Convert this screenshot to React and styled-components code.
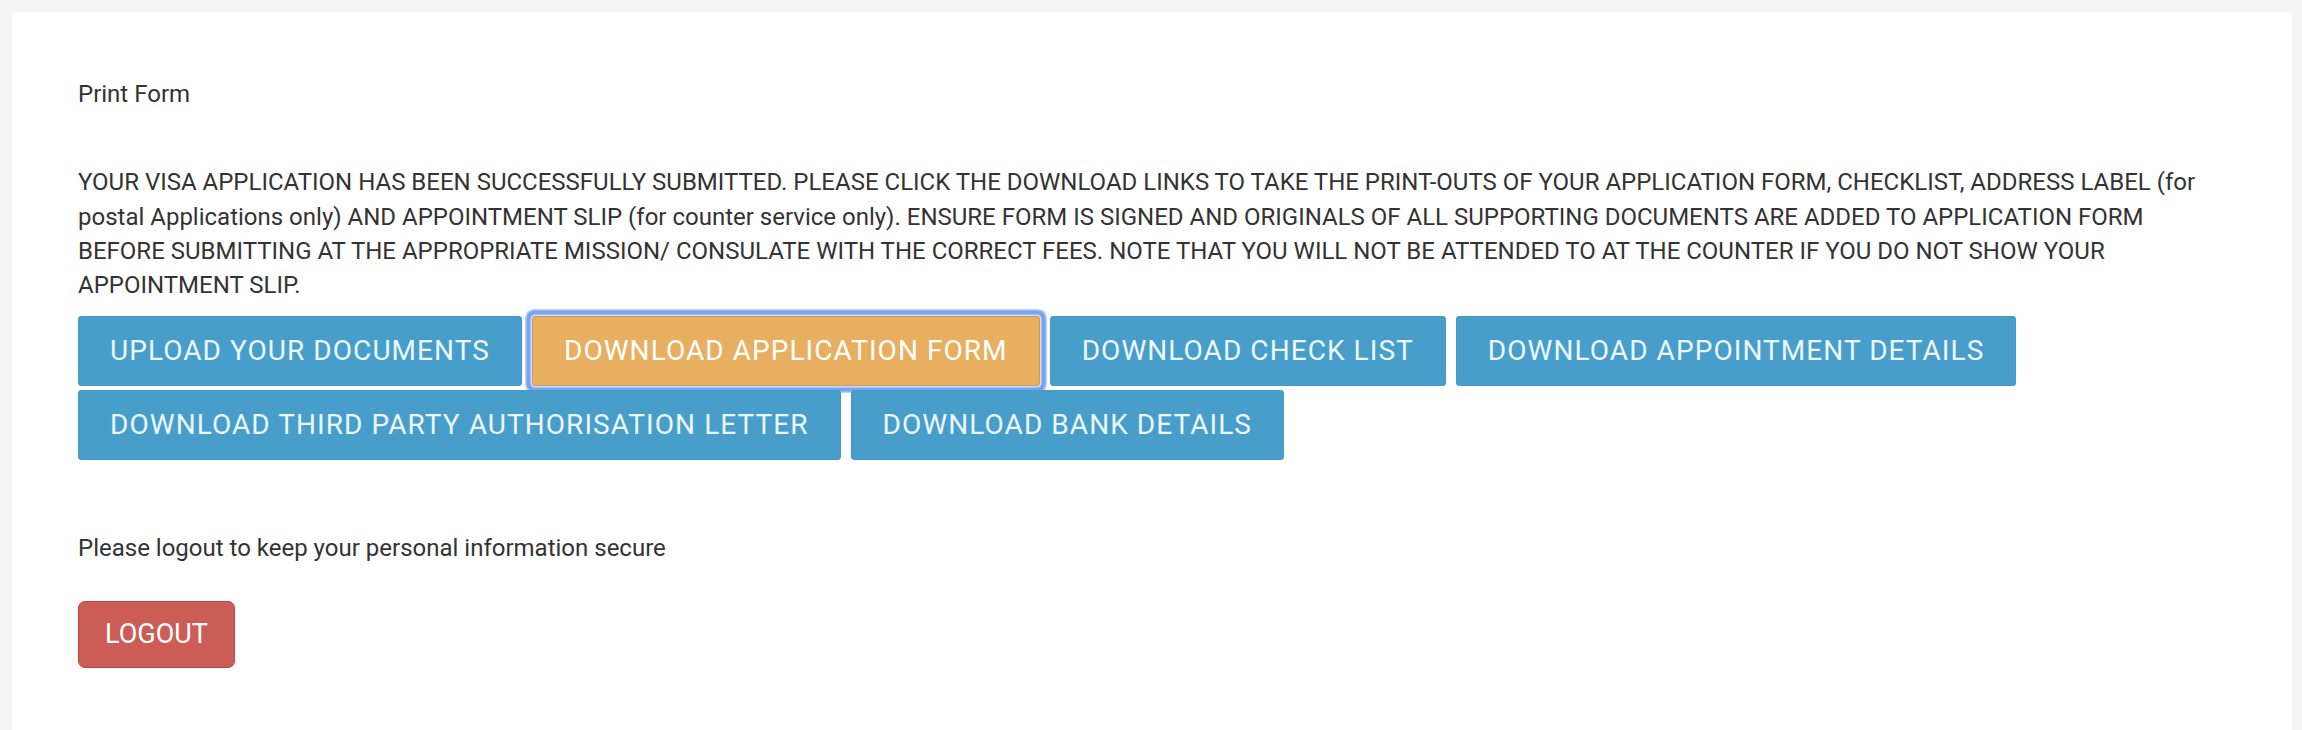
import React from 'react';
import styled, { createGlobalStyle } from 'styled-components';

const GlobalStyle = createGlobalStyle`
    html, body {
        margin: 0;
        padding: 0;
        background: #f4f4f4;
    }
    body {
        font-family: Roboto, 'Liberation Sans', sans-serif;
        color: #333333;
    }
`;

const Page = styled.div`
    padding: 12px 10px 0 12px;
    min-height: 730px;
    box-sizing: border-box;
    display: flex;
`;

const Card = styled.div`
    flex: 1;
    background: #ffffff;
    padding: 65px 66px 40px 66px;
    font-size: 24px;
    line-height: 34.3px;
`;

const Heading = styled.p`
    margin: 0;
`;

const Notice = styled.p`
    margin: 54px 0 0 0;
`;

const Actions = styled.div`
    display: flex;
    flex-wrap: wrap;
    column-gap: 10px;
    row-gap: 4px;
    margin-top: 14px;
`;

const Button = styled.button`
    font-family: Roboto, 'Liberation Sans', sans-serif;
    font-size: 28px;
    letter-spacing: 1.06px;
    line-height: 36px;
    padding: 16px 31px;
    border: 1px solid ${p => (p.$variant === 'warning' ? '#c99a5c' : '#4499c6')};
    border-radius: 3px;
    background: ${p => (p.$variant === 'warning' ? '#e8af60' : '#479ecb')};
    color: ${p => (p.$variant === 'warning' ? '#ffffff' : '#ecf7fc')};
    text-transform: uppercase;
    cursor: pointer;
    white-space: nowrap;
    box-shadow: ${p => (p.$focused
        ? '0 0 0 1.5px #cfdef8, 0 0 0 5.5px #78a4ef, 0 0 0 7px #bdd1f5'
        : 'none')};
    outline: none;
`;

const Note = styled.p`
    margin: 71px 0 0 0;
`;

const LogoutButton = styled.button`
    margin-top: 35px;
    font-family: Roboto, 'Liberation Sans', sans-serif;
    font-size: 27px;
    line-height: 35px;
    padding: 15px 26px;
    border: 1px solid #c4433c;
    border-radius: 7px;
    background: #cb5d56;
    color: #ffffff;
    cursor: pointer;
`;

const actions = [
    { label: 'Upload your documents' },
    { label: 'Download Application Form', variant: 'warning', focused: true },
    { label: 'Download Check List' },
    { label: 'Download Appointment Details' },
    { label: 'Download Third Party Authorisation Letter' },
    { label: 'Download Bank Details' },
];

const App = () => {
    return (
        <Page>
            <GlobalStyle />
            <Card>
                <Heading>Print Form</Heading>

                <Notice>
                    YOUR VISA APPLICATION HAS BEEN SUCCESSFULLY SUBMITTED. PLEASE CLICK THE DOWNLOAD LINKS TO TAKE THE PRINT-OUTS OF YOUR APPLICATION FORM, CHECKLIST, ADDRESS LABEL (for postal Applications only) AND APPOINTMENT SLIP (for counter service only). ENSURE FORM IS SIGNED AND ORIGINALS OF ALL SUPPORTING DOCUMENTS ARE ADDED TO APPLICATION FORM BEFORE SUBMITTING AT THE APPROPRIATE MISSION/ CONSULATE WITH THE CORRECT FEES. NOTE THAT YOU WILL NOT BE ATTENDED TO AT THE COUNTER IF YOU DO NOT SHOW YOUR APPOINTMENT SLIP.
                </Notice>

                <Actions>
                    {actions.map((a) =>
                        <Button key={a.label} $variant={a.variant} $focused={a.focused}>
                            {a.label}
                        </Button>
                    )}
                </Actions>

                <Note>Please logout to keep your personal information secure</Note>

                <LogoutButton>LOGOUT</LogoutButton>
            </Card>
        </Page>
    )
}

export default App;
